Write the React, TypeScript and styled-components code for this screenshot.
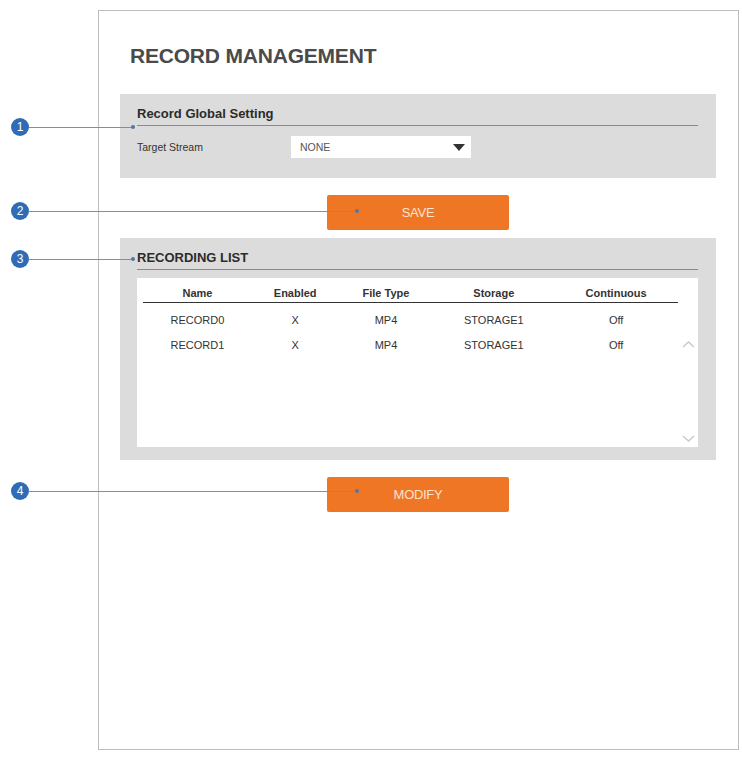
import React from "react";
import styled, { createGlobalStyle } from "styled-components";

const Global = createGlobalStyle`
  body { margin: 0; background: #fff; font-family: "Liberation Sans", Arial, sans-serif; }
`;
const Page = styled.div`position: relative; width: 742px; height: 757px; padding: 10px 0 0 98px; box-sizing: border-box;`;
const Frame = styled.div`
  width: 641px; height: 740px; border: 1px solid #bdbdbd; box-sizing: border-box;
  padding: 32px 22px 0 21px; display: flex; flex-direction: column;
`;
const Title = styled.h1`margin: 0 0 26px 10px; font-size: 21px; font-weight: 700; color: #4a4a4a; letter-spacing: -0.2px; line-height: 25px;`;
const Panel = styled.div<{ $h: number }>`
  background: #dcdcdc; height: ${p => p.$h}px; padding: 12px 18px 0 17px; box-sizing: border-box;
`;
const PanelHead = styled.div`
  font-size: 13px; font-weight: 700; color: #2b2b2b; padding-bottom: 3px;
  border-bottom: 1px solid #8a8a8a; line-height: 16px;
`;
const FieldRow = styled.div`display: flex; align-items: center; margin-top: 10px;`;
const Label = styled.div`width: 154px; font-size: 10.5px; color: #333;`;
const Select = styled.div`
  width: 180px; height: 22px; background: #fff; display: flex; align-items: center;
  justify-content: space-between; padding: 0 6px 0 9px; box-sizing: border-box; font-size: 10.5px; color: #555;
`;
const Caret = styled.span`width: 0; height: 0; border-left: 6px solid transparent; border-right: 6px solid transparent; border-top: 7px solid #333;`;
const BtnRow = styled.div<{ $m: string }>`display: flex; justify-content: center; margin: ${p => p.$m};`;
const Button = styled.div`
  width: 182px; height: 35px; background: #ee7624; color: #fde2cc; font-size: 13px;
  display: flex; align-items: center; justify-content: center; border-radius: 2px; letter-spacing: -0.3px;
`;
const ListBox = styled.div`
  margin-top: 8px; background: #fff; height: 169px; display: flex; padding: 6px 0 0 6px; box-sizing: border-box;
`;
const Table = styled.table`width: 535px; border-collapse: collapse; align-self: flex-start;
  th { font-size: 11px; font-weight: 700; color: #333; padding: 3px 0 3px; border-bottom: 1px solid #333; text-align: center; }
  td { font-size: 11px; color: #333; text-align: center; padding: 0 0 7px; height: 25px; vertical-align: bottom; box-sizing: border-box; }
  tbody tr:first-child td { height: 30px; }
`;
const Scroll = styled.div`flex: 1; display: flex; flex-direction: column; justify-content: space-between; align-items: center; padding: 56px 0 4px;`;
const Call = styled.div<{ $y: number }>`
  position: absolute; left: 11px; top: ${p => p.$y - 9}px; display: flex; align-items: center;
`;
const Dot = styled.div`
  width: 18px; height: 18px; border-radius: 50%; background: #2f6cb5; color: #fff; font-size: 12px;
  display: flex; align-items: center; justify-content: center;
`;
const Line = styled.div<{ $w: number }>`
  width: ${p => p.$w}px; height: 1px; background: #7b8fa6; position: relative;
  &::after { content: ""; position: absolute; right: -2px; top: -2px; width: 4px; height: 4px; border-radius: 50%; background: #4f78a8; }
`;

const calls = [{ n: 1, y: 127, w: 104 }, { n: 2, y: 211, w: 328 }, { n: 3, y: 259, w: 104 }, { n: 4, y: 491, w: 328 }];
const rows = [["RECORD0", "X", "MP4", "STORAGE1", "Off"], ["RECORD1", "X", "MP4", "STORAGE1", "Off"]];

export default function App() {
  return (
    <Page>
      <Global />
      <Frame>
        <Title>RECORD MANAGEMENT</Title>
        <Panel $h={84}>
          <PanelHead>Record Global Setting</PanelHead>
          <FieldRow><Label>Target Stream</Label><Select>NONE<Caret /></Select></FieldRow>
        </Panel>
        <BtnRow $m="17px 0 8px"><Button>SAVE</Button></BtnRow>
        <Panel $h={222}>
          <PanelHead>RECORDING LIST</PanelHead>
          <ListBox>
            <Table>
              <thead><tr><th>Name</th><th>Enabled</th><th>File Type</th><th>Storage</th><th>Continuous</th></tr></thead>
              <tbody>{rows.map(r => <tr key={r[0]}>{r.map((c, i) => <td key={i}>{c}</td>)}</tr>)}</tbody>
            </Table>
            <Scroll>
              <svg width="13" height="8" viewBox="0 0 13 8"><path d="M1 7 L6.5 2 L12 7" stroke="#c8c8c8" strokeWidth="1.3" fill="none" /></svg>
              <svg width="13" height="8" viewBox="0 0 13 8"><path d="M1 1 L6.5 6 L12 1" stroke="#c8c8c8" strokeWidth="1.3" fill="none" /></svg>
            </Scroll>
          </ListBox>
        </Panel>
        <BtnRow $m="17px 0 0"><Button>MODIFY</Button></BtnRow>
      </Frame>
      {calls.map(c => (
        <Call key={c.n} $y={c.y}><Dot>{c.n}</Dot><Line $w={c.w} /></Call>
      ))}
    </Page>
  );
}
